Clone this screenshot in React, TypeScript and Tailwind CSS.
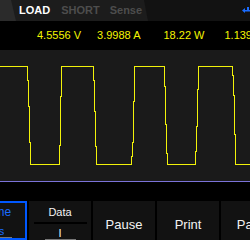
const wave =
  "0,16.5 27.5,16.5 27.5,30 28.5,30 28.5,56 29.5,56 29.5,92 30.5,92 30.5,114.5 59.5,114.5 59.5,95 60.5,95 60.5,46 61.5,46 61.5,16.5 93.5,16.5 93.5,30 94.5,30 94.5,61 95.5,61 95.5,96.5 96.5,96.5 96.5,114.5 131.5,114.5 131.5,106.5 132.5,106.5 132.5,92.5 133.5,92.5 133.5,51 134.5,51 134.5,16.5 164.5,16.5 164.5,36.5 165.5,36.5 165.5,74 166.5,74 166.5,103 167.5,103 167.5,114.5 195.5,114.5 195.5,101.5 196.5,101.5 196.5,76.5 197.5,76.5 197.5,39.5 198.5,39.5 198.5,16.5 232.5,16.5 232.5,25.5 233.5,25.5 233.5,45 234.5,45 234.5,84 235.5,84 235.5,114.5 250,114.5";

const readings = [
  { text: "4.5556 V", ml: "ml-[37px]" },
  { text: "3.9988 A", ml: "ml-[16px]" },
  { text: "18.22 W", ml: "ml-[23px]" },
  { text: "1.1397 Ω", ml: "ml-[20px]" },
];

function PlainKey({ label }: { label: string }) {
  return (
    <div className="w-[62px] shrink-0 h-full bg-[#121212] flex justify-center pt-[14px] text-[13px] text-[#f2f2f2]">
      {label}
    </div>
  );
}

export default function App() {
  return (
    <div className="w-[250px] h-[240px] overflow-hidden bg-black flex flex-col font-['Liberation_Sans',Arial,sans-serif]">
      {/* tabs */}
      <div className="h-[21px] shrink-0 flex bg-[#121212]">
        <div className="w-[148px] h-full flex items-center bg-[#1c1c1c] [clip-path:polygon(0_0,144px_0,148px_100%,0_100%)]">
          <div className="w-[16px] h-full shrink-0 bg-[#2b2b2b] [clip-path:polygon(0_0,11px_0,16px_100%,0_100%)]" />
          <span className="ml-[3px] text-[11px] font-bold text-white">LOAD</span>
          <span className="ml-[11px] text-[11px] font-bold text-[#4d4d4d]">SHORT</span>
          <span className="ml-[10px] text-[11px] font-bold text-[#4d4d4d]">Sense</span>
        </div>
        <div className="flex-1 flex items-center justify-end">
          <svg width="9" height="7" viewBox="0 0 9 7" className="mr-[-1px]">
            <path d="M0 3.5 L3 1 L3 6 Z" fill="#1a6cff" />
            <rect x="2" y="3" width="7" height="1.5" fill="#1a6cff" />
            <rect x="5" y="0" width="2" height="3" fill="#1a6cff" />
          </svg>
        </div>
      </div>

      {/* readings */}
      <div className="h-[29px] shrink-0 flex items-center whitespace-nowrap text-[11px] text-[#f5f500]">
        {readings.map((r) => (
          <span key={r.text} className={r.ml}>
            {r.text}
          </span>
        ))}
      </div>

      {/* waveform */}
      <div className="h-[131px] shrink-0 bg-[#1a1a1a]">
        <svg width="250" height="131" viewBox="0 0 250 131" shapeRendering="crispEdges">
          <polyline points={wave} fill="none" stroke="#f2f20a" strokeWidth="1" />
        </svg>
      </div>
      <div className="h-[1px] shrink-0 bg-[#7b72d8]" />
      <div className="h-[19px] shrink-0 bg-black" />

      {/* soft keys */}
      <div className="flex-1 flex gap-[2px] overflow-hidden">
        <div className="w-[62px] shrink-0 -ml-[35px] h-full bg-[#121212] border-2 border-[#0058ff] flex flex-col items-center text-[#1a6cff]">
          <span className="mt-[3px] pl-[4px] leading-[13px] text-[12px]">Time</span>
          <div className="mt-[3px] w-full h-[2px] bg-[#050505]" />
          <span className="mt-[3px] pl-[2px] w-[31px] text-center leading-[12px] text-[11px] border-b border-[#777]">1 s</span>
        </div>
        <div className="w-[62px] shrink-0 h-full bg-[#121212] flex flex-col items-center text-[11px] text-[#f2f2f2]">
          <span className="mt-[5px] leading-[13px]">Data</span>
          <div className="mt-[3px] w-[53px] h-[2px] bg-black" />
          <span className="mt-[3px] leading-[12px] w-[31px] text-center border-b border-[#777]">I</span>
        </div>
        <PlainKey label="Pause" />
        <PlainKey label="Print" />
        <PlainKey label="Page" />
      </div>
    </div>
  );
}
